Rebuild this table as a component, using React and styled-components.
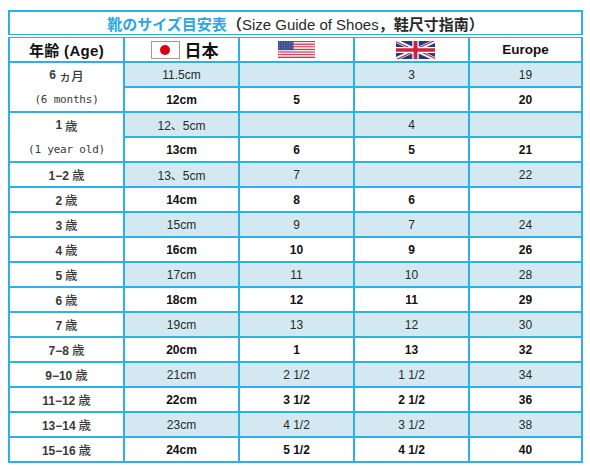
import React from "react";
import styled, { createGlobalStyle } from "styled-components";

const GlobalStyle = createGlobalStyle`
  html, body { margin: 0; padding: 0; background: #ffffff; }
  body {
    font-family: "Liberation Sans", "Noto Sans CJK JP", sans-serif;
    color: #222;
  }
`;

const LINE = "#2bb1e7";
const SHADE = "#d3e8f0";

const Page = styled.div`
  padding: 10px 0 0 8px;
  width: 590px;
  height: 470px;
  box-sizing: border-box;
`;

const Table = styled.table`
  border-collapse: collapse;
  table-layout: fixed;
  width: 573px;
  border: 2px solid ${LINE};
`;

const Row = styled.tr`
  height: ${(p) => p.$h || 25}px;
`;

const TitleCell = styled.td`
  border-bottom: 4px double ${LINE};
  text-align: center;
  padding: 0;
  font-size: 15px;
  font-family: "Liberation Sans", "Noto Sans CJK JP", sans-serif;
  color: #2a2a2a;
  white-space: nowrap;
`;

const TitleAccent = styled.span`
  color: #2aa7e3;
  font-weight: 700;
  font-family: "Noto Sans CJK JP", sans-serif;
`;

const TitleCjk = styled.span`
  font-weight: 700;
  font-family: "Noto Sans CJK JP", sans-serif;
`;

const HeadCell = styled.th`
  border: 2px solid ${LINE};
  padding: 0;
  text-align: center;
  vertical-align: middle;
  font-size: ${(p) => p.$size || 14}px;
  font-weight: 700;
  color: #111;
  white-space: nowrap;
`;

const HeadInner = styled.div`
  display: flex;
  align-items: center;
  justify-content: center;
  gap: ${(p) => p.$gap || 0}px;
  padding-left: ${(p) => p.$shift || 0}px;
`;

const JpText = styled.span`
  font-family: "Noto Sans CJK JP", sans-serif;
  font-size: 17px;
  font-weight: 700;
  line-height: 1;
`;

const AgeHead = styled.span`
  font-size: 15px;
  font-weight: 700;
  letter-spacing: 0.3px;
`;

const AgeCell = styled.td`
  border: 2px solid ${LINE};
  padding: 0;
  text-align: center;
  vertical-align: middle;
  background: #ffffff;
  font-size: 12px;
  font-weight: 700;
  color: #3a3a3a;
  white-space: nowrap;
`;

const AgeStack = styled.div`
  display: flex;
  flex-direction: column;
`;

const AgeLine = styled.div`
  height: 24px;
  display: flex;
  align-items: center;
  justify-content: center;
`;

const AgeSub = styled.span`
  font-family: "DejaVu Sans Mono", monospace;
  font-size: 11px;
  letter-spacing: -0.2px;
  font-weight: 400;
  color: #3a3a3a;
`;

const Kanji = styled.span`
  font-family: "Noto Sans CJK JP", sans-serif;
  font-weight: 500;
  margin-left: 3px;
  font-size: 12.5px;
`;

const DataCell = styled.td`
  border: 2px solid ${LINE};
  padding: 0;
  text-align: center;
  vertical-align: middle;
  background: ${(p) => (p.$shaded ? SHADE : "#ffffff")};
  font-size: 12px;
  font-weight: ${(p) => (p.$shaded ? 400 : 700)};
  color: ${(p) => (p.$shaded ? "#2a2a2a" : "#111")};
  white-space: nowrap;
`;

const JpFlagBox = styled.span`
  display: inline-flex;
  align-items: center;
  justify-content: center;
  width: 29px;
  height: 18px;
  box-sizing: border-box;
  border: 1px solid #9a9a9a;
  background: #fff;
`;

const JpDot = styled.span`
  width: 10px;
  height: 10px;
  border-radius: 50%;
  background: #d8000f;
`;

function UsFlag() {
  const stripes = [];
  for (let i = 0; i < 13; i++) {
    stripes.push(
      <rect key={i} x="0" y={i * 3} width="74" height="3" fill={i % 2 === 0 ? "#c73a55" : "#f6e9ec"} />
    );
  }
  const stars = [];
  for (let r = 0; r < 5; r++) {
    for (let c = 0; c < 6; c++) {
      stars.push(<circle key={`${r}-${c}`} cx={3 + c * 5} cy={2.5 + r * 4} r="0.9" fill="#c9cfe6" />);
    }
  }
  return (
    <svg width="37" height="17" viewBox="0 0 74 39" preserveAspectRatio="none">
      {stripes}
      <rect x="0" y="0" width="31" height="21" fill="#3b4b8c" />
      {stars}
    </svg>
  );
}

function UkFlag() {
  return (
    <svg width="39" height="18" viewBox="0 0 60 30" preserveAspectRatio="none">
      <clipPath id="ukclip">
        <path d="M30,15 h30 v15 z v15 h-30 z h-30 v-15 z v-15 h30 z" />
      </clipPath>
      <rect x="0" y="0" width="60" height="30" fill="#1f3a86" />
      <path d="M0,0 L60,30 M60,0 L0,30" stroke="#fff" strokeWidth="6" />
      <path d="M0,0 L60,30 M60,0 L0,30" clipPath="url(#ukclip)" stroke="#d0203a" strokeWidth="4" />
      <path d="M30,0 v30 M0,15 h60" stroke="#fff" strokeWidth="10" />
      <path d="M30,0 v30 M0,15 h60" stroke="#d0203a" strokeWidth="6" />
    </svg>
  );
}

function Age({ n, unit = "歳" }) {
  return (
    <>
      {n}
      <Kanji>{unit}</Kanji>
    </>
  );
}

const rows = [
  { age: { main: <Age n="6" unit="ヵ月" />, sub: "(6 months)" }, span: 2, shaded: true, v: ["11.5cm", "", "3", "19"] },
  { shaded: false, v: ["12cm", "5", "", "20"] },
  { age: { main: <Age n="1" />, sub: "(1 year old)" }, span: 2, shaded: true, v: ["12、5cm", "", "4", ""] },
  { shaded: false, v: ["13cm", "6", "5", "21"] },
  { age: <Age n="1−2" />, shaded: true, v: ["13、5cm", "7", "", "22"] },
  { age: <Age n="2" />, shaded: false, v: ["14cm", "8", "6", ""] },
  { age: <Age n="3" />, shaded: true, v: ["15cm", "9", "7", "24"] },
  { age: <Age n="4" />, shaded: false, v: ["16cm", "10", "9", "26"] },
  { age: <Age n="5" />, shaded: true, v: ["17cm", "11", "10", "28"] },
  { age: <Age n="6" />, shaded: false, v: ["18cm", "12", "11", "29"] },
  { age: <Age n="7" />, shaded: true, v: ["19cm", "13", "12", "30"] },
  { age: <Age n="7−8" />, shaded: false, v: ["20cm", "1", "13", "32"] },
  { age: <Age n="9−10" />, shaded: true, v: ["21cm", "2 1/2", "1 1/2", "34"] },
  { age: <Age n="11−12" />, shaded: false, v: ["22cm", "3 1/2", "2 1/2", "36"] },
  { age: <Age n="13−14" />, shaded: true, v: ["23cm", "4 1/2", "3 1/2", "38"] },
  { age: <Age n="15−16" />, shaded: false, v: ["24cm", "5 1/2", "4 1/2", "40"] },
];

export default function App() {
  return (
    <Page>
      <GlobalStyle />
      <Table>
        <colgroup>
          <col style={{ width: 115 }} />
          <col style={{ width: 115 }} />
          <col style={{ width: 115 }} />
          <col style={{ width: 115 }} />
          <col style={{ width: 113 }} />
        </colgroup>
        <tbody>
          <Row $h={25}>
            <TitleCell colSpan={5}>
              <TitleAccent>靴のサイズ目安表</TitleAccent>
              <TitleCjk>（</TitleCjk>Size Guide of Shoes<TitleCjk>，鞋尺寸指南）</TitleCjk>
            </TitleCell>
          </Row>
          <Row $h={26}>
            <HeadCell>
              <AgeHead>
                <TitleCjk>年齢</TitleCjk> (Age)
              </AgeHead>
            </HeadCell>
            <HeadCell>
              <HeadInner $gap={5} $shift={6}>
                <JpFlagBox>
                  <JpDot />
                </JpFlagBox>
                <JpText>日本</JpText>
              </HeadInner>
            </HeadCell>
            <HeadCell>
              <HeadInner>
                <UsFlag />
              </HeadInner>
            </HeadCell>
            <HeadCell>
              <HeadInner $shift={8}>
                <UkFlag />
              </HeadInner>
            </HeadCell>
            <HeadCell $size={13.5}>Europe</HeadCell>
          </Row>
          {rows.map((r, i) => (
            <Row key={i}>
              {r.age &&
                (r.span ? (
                  <AgeCell rowSpan={r.span}>
                    <AgeStack>
                      <AgeLine>{r.age.main}</AgeLine>
                      <AgeLine>
                        <AgeSub>{r.age.sub}</AgeSub>
                      </AgeLine>
                    </AgeStack>
                  </AgeCell>
                ) : (
                  <AgeCell>{r.age}</AgeCell>
                ))}
              {r.v.map((val, j) => (
                <DataCell key={j} $shaded={r.shaded}>
                  {val}
                </DataCell>
              ))}
            </Row>
          ))}
        </tbody>
      </Table>
    </Page>
  );
}
